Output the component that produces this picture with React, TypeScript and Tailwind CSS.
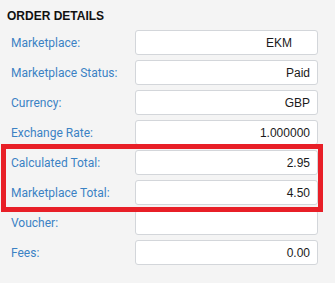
import React from "react";

const rows: { label: string; value: string; extraPad?: boolean }[] = [
  { label: "Marketplace:", value: "EKM", extraPad: true },
  { label: "Marketplace Status:", value: "Paid" },
  { label: "Currency:", value: "GBP" },
  { label: "Exchange Rate:", value: "1.000000" },
  { label: "Calculated Total:", value: "2.95" },
  { label: "Marketplace Total:", value: "4.50" },
  { label: "Voucher:", value: "" },
  { label: "Fees:", value: "0.00" },
];

export default function App() {
  return (
    <div className="relative w-[335px] h-[283px] bg-[#f4f4f4] overflow-hidden">
      <div className="h-[30px] pt-[9px] pl-[7px] leading-[14px] text-[12px] font-bold text-[#111] [font-family:'Liberation_Sans',Arial,sans-serif]">
        ORDER DETAILS
      </div>
      <div className="flex flex-col gap-[5px]">
        {rows.map((r) => (
          <div key={r.label} className="flex items-center h-[25px]">
            <div className="w-[135px] pl-[11px] text-[12px] text-[#3b82c4] [font-family:Roboto,'Liberation_Sans',sans-serif]">
              {r.label}
            </div>
            <div
              className={
                "w-[183px] h-[25px] bg-white border border-[#d3d6da] rounded-[3px] flex items-center justify-end text-[12px] text-[#1a1a1a] [font-family:'Liberation_Sans',Arial,sans-serif] " +
                (r.extraPad ? "pr-[25px]" : "pr-[7px]")
              }
            >
              {r.value}
            </div>
          </div>
        ))}
      </div>
      <div className="absolute left-[1px] top-[144px] w-[322px] h-[68px] border-[5px] border-[#e81f27]" />
    </div>
  );
}
